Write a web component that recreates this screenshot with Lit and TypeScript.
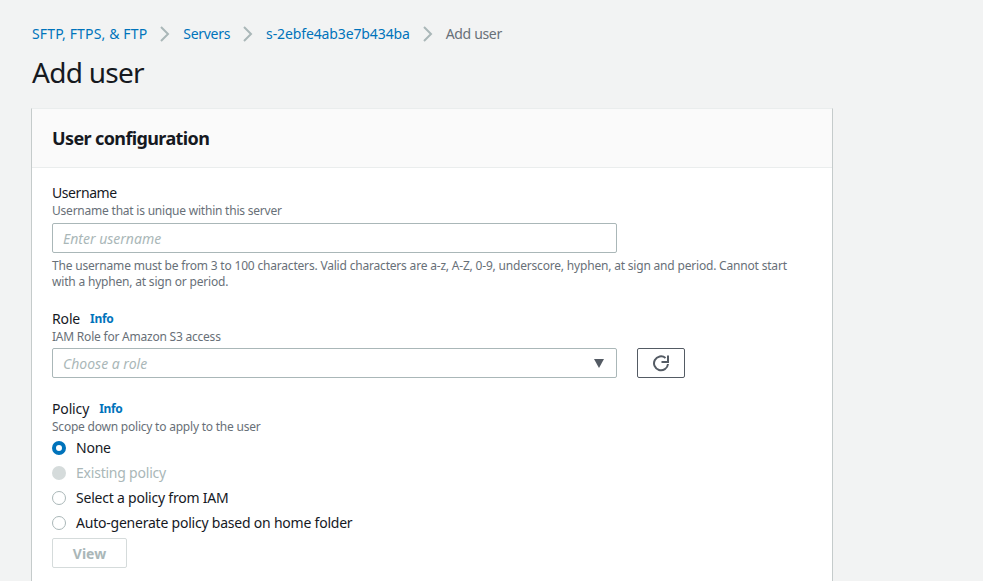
import { LitElement, html, css } from "lit";
import { customElement } from "lit/decorators.js";

@customElement("app-root")
export class AppRoot extends LitElement {
  static styles = css`
    :host {
      display: block;
      height: 581px;
      overflow: hidden;
      background: #f2f3f3;
      font-family: "Noto Sans", "Open Sans", sans-serif;
      color: #16191f;
      font-size: 14px;
    }
    .page { padding: 23px 150px 0 32px; }
    .crumbs { display: flex; align-items: center; height: 22px; line-height: 22px; font-size: 14px; }
    .crumbs a { color: #0073bb; text-decoration: none; letter-spacing: -0.12px; }
    .crumbs a.root { letter-spacing: 0.15px; }
    .crumbs a.short { letter-spacing: -0.3px; }
    .crumbs .cur { color: #687078; letter-spacing: -0.35px; }
    .sep { width: 36px; display: flex; justify-content: center; }
    h1 { margin: 7px 0 0; font-size: 28px; font-weight: 400; line-height: 40px; height: 40px; letter-spacing: -0.72px; }
    .card {
      margin: 16px 0 0 -1px;
      width: 802px;
      box-sizing: border-box;
      background: #fff;
      border-left: 1px solid #c5cbcb;
      border-right: 1px solid #c5cbcb;
      border-top: 1px solid #eaeded;
      height: 600px;
    }
    .head {
      height: 59px;
      box-sizing: border-box;
      background: #fafafa;
      border-bottom: 1px solid #eaeded;
      padding: 0 20px;
      display: flex;
      align-items: center;
    }
    h2 { margin: 0; font-size: 18px; font-weight: 700; line-height: 22px; letter-spacing: -0.62px; }
    .body { padding: 15px 20px; }
    .label { display: flex; align-items: center; height: 20px; line-height: 20px; font-size: 14px; letter-spacing: -0.15px; }
    .label.tight { letter-spacing: -0.42px; }
    .info { color: #0073bb; font-size: 12px; font-weight: 700; margin-left: 10px; letter-spacing: -0.3px; }
    .desc { font-size: 12px; color: #687078; line-height: 16px; letter-spacing: -0.22px; }
    .row { display: flex; align-items: center; gap: 20px; margin-top: 3px; }
    .row.first { margin-top: 4px; }
    .input {
      width: 565px;
      height: 30px;
      box-sizing: border-box;
      border: 1px solid #aab7b8;
      border-radius: 2px;
      background: #fff;
      display: flex;
      align-items: center;
      justify-content: space-between;
      padding: 0 12px 0 10px;
      color: #aab7b8;
      font-style: italic;
      font-size: 14px;
    }
    .arrow { width: 0; height: 0; border-left: 5.5px solid transparent; border-right: 5.5px solid transparent; border-top: 9px solid #545b64; }
    .refresh {
      width: 48px;
      height: 30px;
      box-sizing: border-box;
      border: 1px solid #545b64;
      border-radius: 2px;
      display: flex;
      align-items: center;
      justify-content: center;
    }
    .hint { font-size: 12px; color: #687078; line-height: 16px; margin-top: 5px; width: 760px; letter-spacing: -0.19px; }
    .sec1 { margin-top: 19px; }
    .sec2 { margin-top: 21px; }
    .radio { display: flex; align-items: center; height: 25px; gap: 10px; font-size: 14px; letter-spacing: -0.22px; }
    .dot { width: 14px; height: 14px; box-sizing: border-box; border-radius: 50%; border: 1px solid #aab7b8; background: #fff; }
    .dot.on { border: 4px solid #0073bb; }
    .dot.off { border: none; background: #d5dbdb; }
    .radio.dis { color: #aab7b8; }
    .view {
      margin-top: 3px;
      width: 75px;
      height: 30px;
      box-sizing: border-box;
      border: 1px solid #d5dbdb;
      border-radius: 2px;
      display: flex;
      align-items: center;
      justify-content: center;
      font-weight: 700;
      color: #aab7b8;
      font-size: 14px;
    }
  `;

  private chevron() {
    return html`<svg width="12" height="16" viewBox="0 0 12 16" fill="none" stroke="#aab7b8" stroke-width="2"><path d="M2 1l7 7-7 7"/></svg>`;
  }

  render() {
    return html`
      <div class="page">
        <nav class="crumbs">
          <a class="root" href="#">SFTP, FTPS, &amp; FTP</a><span class="sep">${this.chevron()}</span>
          <a class="short" href="#">Servers</a><span class="sep">${this.chevron()}</span>
          <a href="#">s-2ebfe4ab3e7b434ba</a><span class="sep">${this.chevron()}</span>
          <span class="cur">Add user</span>
        </nav>
        <h1>Add user</h1>
        <section class="card">
          <div class="head"><h2>User configuration</h2></div>
          <div class="body">
            <div class="label tight">Username</div>
            <div class="desc">Username that is unique within this server</div>
            <div class="row first"><div class="input">Enter username</div></div>
            <div class="hint">The username must be from 3 to 100 characters. Valid characters are a-z, A-Z, 0-9, underscore, hyphen, at sign and period. Cannot start with a hyphen, at sign or period.</div>
            <div class="sec1">
              <div class="label">Role <a class="info">Info</a></div>
              <div class="desc">IAM Role for Amazon S3 access</div>
              <div class="row">
                <div class="input">Choose a role<span class="arrow"></span></div>
                <div class="refresh">
                  <svg width="18" height="18" viewBox="0 0 18 18" fill="none" stroke="#545b64" stroke-width="2"><path d="M16 10A7 7 0 1 1 13.5 3.9"/><path d="M16 1.5V8h-6.5"/></svg>
                </div>
              </div>
            </div>
            <div class="sec2">
              <div class="label">Policy <a class="info">Info</a></div>
              <div class="desc">Scope down policy to apply to the user</div>
              <div class="radios">
                <div class="radio"><span class="dot on"></span>None</div>
                <div class="radio dis"><span class="dot off"></span>Existing policy</div>
                <div class="radio"><span class="dot"></span>Select a policy from IAM</div>
                <div class="radio"><span class="dot"></span>Auto-generate policy based on home folder</div>
              </div>
              <div class="view">View</div>
            </div>
          </div>
        </section>
      </div>
    `;
  }
}
